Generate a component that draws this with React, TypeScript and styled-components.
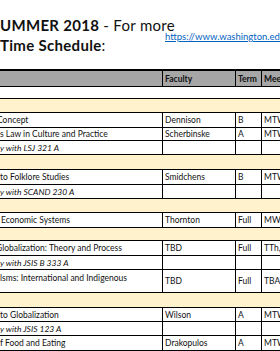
import styled, { createGlobalStyle } from 'styled-components';

const GlobalStyle = createGlobalStyle`
  html, body {
    margin: 0;
    padding: 0;
    background: #fff;
    overflow: hidden;
  }
  body {
    font-family: Lato, "Open Sans", sans-serif;
    color: #111;
  }
`;

type RowData =
  | { kind: 'blank'; h: number }
  | { kind: 'band'; h: number }
  | { kind: 'data'; h: number; title: string; fac: string; term: string; meet: string; tall?: boolean; shift?: number }
  | { kind: 'note'; h: number; title: string };

const rows: RowData[] = [
  { kind: 'blank', h: 12 },
  { kind: 'band', h: 14 },
  { kind: 'data', h: 15, title: 'Concept', fac: 'Dennison', term: 'B', meet: 'MTWTh', shift: -3 },
  { kind: 'data', h: 13, title: 's Law in Culture and Practice', fac: 'Scherbinske', term: 'A', meet: 'MTWTh' },
  { kind: 'note', h: 14, title: 'y with LSJ 321 A' },
  { kind: 'band', h: 15 },
  { kind: 'data', h: 15, title: 'to Folklore Studies', fac: 'Smidchens', term: 'B', meet: 'MTWTh' },
  { kind: 'note', h: 14, title: 'y with SCAND 230 A' },
  { kind: 'band', h: 14 },
  { kind: 'data', h: 15, title: 'Economic Systems', fac: 'Thornton', term: 'Full', meet: 'MW 10:30', shift: 1 },
  { kind: 'band', h: 13 },
  { kind: 'data', h: 15, title: 'Globalization: Theory and Process', fac: 'TBD', term: 'Full', meet: 'TTh, 1:30', shift: -4 },
  { kind: 'note', h: 14, title: 'y with JSIS B 333 A' },
  { kind: 'data', h: 23, title: 'lsms: International and Indigenous', fac: 'TBD', term: 'Full', meet: 'TBA: online', tall: true },
  { kind: 'band', h: 15 },
  { kind: 'data', h: 14, title: 'to Globalization', fac: 'Wilson', term: 'A', meet: 'MTWTh' },
  { kind: 'note', h: 14, title: 'y with JSIS 123 A' },
  { kind: 'data', h: 15, title: 'f Food and Eating', fac: 'Drakopulos', term: 'A', meet: 'MTWTh' },
];

function App() {
  return (
    <>
      <GlobalStyle />
      <Sheet>
        <TitleBlock>
          <TitleCol>
            <TitleLine>
              <b>UMMER 2018</b> - For more
            </TitleLine>
            <TitleLine>
              <b>Time Schedule</b>:
            </TitleLine>
          </TitleCol>
          <LinkCol>
            <SheetLink href="#">https://www.washington.edu/students/timeschd/</SheetLink>
          </LinkCol>
        </TitleBlock>

        <Table>
          <HeaderRow>
            <Cell />
            <Cell>Faculty</Cell>
            <Cell>Term</Cell>
            <Cell $last>Meeting Times</Cell>
          </HeaderRow>
          {rows.map((row, i) => {
            if (row.kind === 'blank') return <FullRow key={i} $h={row.h} />;
            if (row.kind === 'band') return <FullRow key={i} $h={row.h} $band />;
            if (row.kind === 'note')
              return (
                <Row key={i} $h={row.h}>
                  <TitleCell $italic>
                    <TitleText>{row.title}</TitleText>
                  </TitleCell>
                  <Cell />
                  <Cell />
                  <Cell $last />
                </Row>
              );
            return (
              <Row key={i} $h={row.h}>
                <TitleCell $top={row.tall}>
                  <TitleText $shift={row.shift ?? 0}>{row.title}</TitleText>
                </TitleCell>
                <Cell>{row.fac}</Cell>
                <Cell>{row.term}</Cell>
                <Cell $last>{row.meet}</Cell>
              </Row>
            );
          })}
        </Table>
      </Sheet>
    </>
  );
}

const Sheet = styled.div`
  width: 280px;
  height: 351px;
  overflow: hidden;
  background: #fff;
`;

const TitleBlock = styled.div`
  display: flex;
  height: 69px;
`;

const TitleCol = styled.div`
  width: 163px;
  flex-shrink: 0;
  padding-top: 15px;
  box-sizing: border-box;
`;

const TitleLine = styled.div`
  font-family: Lato, sans-serif;
  font-size: 15px;
  letter-spacing: 0.3px;
  line-height: 20px;
  white-space: nowrap;
  color: #111;
  b {
    font-weight: 700;
  }
`;

const LinkCol = styled.div`
  padding: 24px 0 0 2px;
  white-space: nowrap;
`;

const SheetLink = styled.a`
  font-family: Lato, sans-serif;
  font-size: 9.5px;
  color: #0563c1;
  text-decoration: underline;
`;

const Table = styled.div`
  display: flex;
  flex-direction: column;
  width: 300px;
`;

const Row = styled.div<{ $h: number }>`
  display: grid;
  grid-template-columns: 163px 73px 26px 1fr;
  box-sizing: border-box;
  height: ${(p) => p.$h}px;
  border-bottom: 1px solid #000;
  background: #fff;
`;

const HeaderRow = styled.div`
  display: grid;
  grid-template-columns: 163px 73px 26px 1fr;
  box-sizing: border-box;
  height: 18px;
  border-top: 2px solid #000;
  border-bottom: 1px solid #000;
  background: #a6a6a6;
  font-weight: 700;
`;

const FullRow = styled.div<{ $h: number; $band?: boolean }>`
  box-sizing: border-box;
  height: ${(p) => p.$h}px;
  border-bottom: 1px solid #000;
  background: ${(p) => (p.$band ? '#fff2cc' : '#fff')};
`;

const Cell = styled.div<{ $last?: boolean }>`
  display: flex;
  align-items: center;
  padding-left: 2px;
  border-right: ${(p) => (p.$last ? 'none' : '1px solid #000')};
  font-size: 8.5px;
  white-space: nowrap;
  overflow: hidden;
  color: #111;
`;

const TitleCell = styled.div<{ $italic?: boolean; $top?: boolean }>`
  display: flex;
  align-items: ${(p) => (p.$top ? 'flex-start' : 'center')};
  padding-top: ${(p) => (p.$top ? '3px' : '0')};
  border-right: 1px solid #000;
  font-size: 8.5px;
  font-style: ${(p) => (p.$italic ? 'italic' : 'normal')};
  white-space: nowrap;
  overflow: hidden;
  color: #111;
`;

const TitleText = styled.span<{ $shift?: number }>`
  margin-left: ${(p) => p.$shift ?? 0}px;
`;

export default App;
